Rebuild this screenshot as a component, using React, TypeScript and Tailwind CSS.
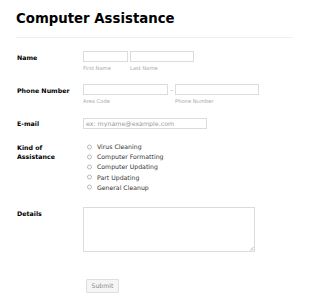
import React from "react";

const font = "font-['DejaVu_Sans',sans-serif]";

function Label({ children, pt = "pt-[1.5px]" }: { children: React.ReactNode; pt?: string }) {
  return (
    <div className={`w-[67px] shrink-0 pl-[1px] ${pt} text-[6.3px] leading-[9px] font-bold text-black`}>
      {children}
    </div>
  );
}

function Box({ w }: { w: string }) {
  return <div className={`${w} h-[11px] border border-[#dcdcdc] bg-white`} />;
}

function Sub({ children }: { children: React.ReactNode }) {
  return <div className="mt-[2.5px] text-[5.2px] leading-[7px] text-[#a8a8a8]">{children}</div>;
}

export default function App() {
  const options = ["Virus Cleaning", "Computer Formatting", "Computer Updating", "Part Updating", "General Cleanup"];
  return (
    <div className={`${font} w-[310px] h-[296px] bg-white pl-[16px] pr-[17px] overflow-hidden`}>
      <h1 className="pt-[11px] text-[13.3px] leading-[16px] font-bold text-black">Computer Assistance</h1>
      <div className="mt-[10px] h-[1px] bg-[#eeeeee]" />

      {/* Name */}
      <div className="mt-[13px] flex">
        <Label>Name</Label>
        <div className="flex gap-[2px]">
          <div>
            <Box w="w-[45px]" />
            <Sub>First Name</Sub>
          </div>
          <div>
            <Box w="w-[64px]" />
            <Sub>Last Name</Sub>
          </div>
        </div>
      </div>

      {/* Phone */}
      <div className="mt-[12.5px] flex">
        <Label>Phone Number</Label>
        <div className="flex">
          <div>
            <Box w="w-[85px]" />
            <Sub>Area Code</Sub>
          </div>
          <div className="w-[7px] h-[11px] flex items-center justify-center text-[6px] leading-[11px] text-[#888]">-</div>
          <div>
            <Box w="w-[84px]" />
            <Sub>Phone Number</Sub>
          </div>
        </div>
      </div>

      {/* Email */}
      <div className="mt-[13px] flex">
        <Label>E-mail</Label>
        <input
          className="w-[124px] h-[11px] border border-[#dcdcdc] bg-white px-[2px] text-[6.3px] leading-[9px] text-[#333] placeholder:text-[#9a9a9a] outline-none"
          placeholder="ex: myname@example.com"
        />
      </div>

      {/* Kind of Assistance */}
      <div className="mt-[13.5px] flex">
        <Label pt="pt-[1px]">
          Kind of
          <br />
          Assistance
        </Label>
        <div className="flex flex-col">
          {options.map((o) => (
            <div key={o} className="flex items-center h-[10.2px]">
              <span className="ml-[4px] mr-[5px] w-[5px] h-[5px] rounded-full border border-[#b8b8b8] bg-white -translate-y-[0.5px]" />
              <span className="text-[6.2px] leading-[10.2px] text-[#333]">{o}</span>
            </div>
          ))}
        </div>
      </div>

      {/* Details */}
      <div className="mt-[14px] flex">
        <Label pt="pt-[2px]">Details</Label>
        <div className="relative w-[172px] h-[45px]">
          <textarea className="block w-full h-full border border-[#dcdcdc] bg-white resize-none outline-none" />
          <svg className="absolute right-[1px] bottom-[1px]" width="5" height="5" viewBox="0 0 5 5">
            <path d="M4.5 1 L1 4.5 M4.5 3 L3 4.5" stroke="#a0a0a0" strokeWidth="0.7" />
          </svg>
        </div>
      </div>

      {/* Submit */}
      <div className="mt-[19px] pl-[70px]">
        <button className="w-[33px] h-[14px] border border-[#dedede] bg-[#f5f5f5] rounded-[1px] text-[6.2px] leading-[12px] text-[#8a8a8a]">
          Submit
        </button>
      </div>
    </div>
  );
}
